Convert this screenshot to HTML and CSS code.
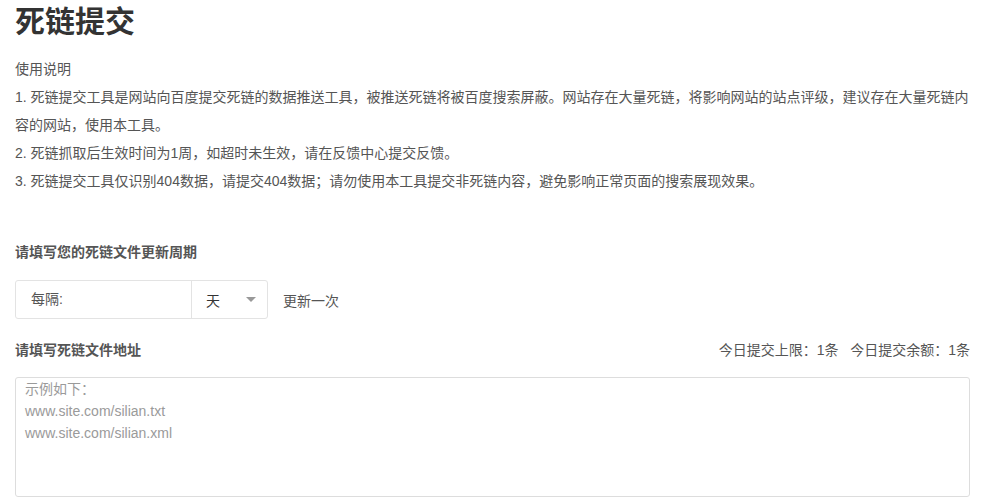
FILE: index.html
```html
<!DOCTYPE html>
<html lang="zh-CN">
  <head>
    <meta charset="UTF-8" />
    <meta name="viewport" content="width=device-width, initial-scale=1.0" />
    <title>死链提交</title>
    <link rel="stylesheet" href="styles.css">
  </head>
  <body>
    <div class="page">
      <h1 class="page-title">死链提交</h1>
      <div class="intro">
        <p>使用说明</p>
        <p>1. 死链提交工具是网站向百度提交死链的数据推送工具，被推送死链将被百度搜索屏蔽。网站存在大量死链，将影响网站的站点评级，建议存在大量死链内容的网站，使用本工具。</p>
        <p>2. 死链抓取后生效时间为1周，如超时未生效，请在反馈中心提交反馈。</p>
        <p>3. 死链提交工具仅识别404数据，请提交404数据；请勿使用本工具提交非死链内容，避免影响正常页面的搜索展现效果。</p>
      </div>

      <div class="section-title">请填写您的死链文件更新周期</div>
      <div class="period-row">
        <div class="period-group">
          <div class="period-label">每隔:</div>
          <div class="period-select">
            <span>天</span>
            <span class="caret"></span>
          </div>
        </div>
        <span class="period-suffix">更新一次</span>
      </div>

      <div class="address-head">
        <div class="section-title">请填写死链文件地址</div>
        <div class="quota">今日提交上限：1条&nbsp;&nbsp;&nbsp;今日提交余额：1条</div>
      </div>
      <textarea class="address-box" placeholder="示例如下：&#10;www.site.com/silian.txt&#10;www.site.com/silian.xml"></textarea>
    </div>
  </body>
</html>
```

FILE: styles.css
```css
body {
  margin: 0;
  padding: 0;
  background: #fff;
  font-family: "Liberation Sans", "Noto Sans CJK SC", sans-serif;
  font-size: 14px;
  color: #555;
}
.page {
  padding: 0 12px 0 15px;
}
.page-title {
  margin: 0;
  font-size: 30px;
  line-height: 44px;
  font-weight: bold;
  color: #333;
}
.intro {
  margin-top: 11px;
}
.intro p {
  margin: 0;
  line-height: 28px;
}
.section-title {
  font-weight: bold;
  color: #555;
  line-height: 20px;
}
.intro + .section-title {
  margin-top: 47px;
}
.period-row {
  display: flex;
  align-items: center;
  margin-top: 18px;
}
.period-group {
  display: flex;
  width: 251px;
  height: 37px;
  border: 1px solid #e3e3e3;
  border-radius: 3px;
}
.period-label {
  width: 160px;
  padding-left: 15px;
  line-height: 37px;
  color: #555;
  border-right: 1px solid #e3e3e3;
}
.period-select {
  flex: 1;
  display: flex;
  align-items: center;
  justify-content: space-between;
  padding: 0 11px 0 14px;
  color: #333;
}
.caret {
  width: 0;
  height: 0;
  border-left: 5px solid transparent;
  border-right: 5px solid transparent;
  border-top: 5px solid #999;
}
.period-suffix {
  margin-left: 15px;
  color: #555;
}
.address-head {
  display: flex;
  justify-content: space-between;
  align-items: center;
  margin-top: 21px;
}
.quota {
  color: #555;
  line-height: 20px;
}
.address-box {
  display: block;
  box-sizing: border-box;
  width: 955px;
  height: 120px;
  margin-top: 17px;
  padding: 0 9px;
  border: 1px solid #ddd;
  border-radius: 3px;
  font-family: "Liberation Sans", "Noto Sans CJK SC", sans-serif;
  font-size: 14px;
  line-height: 22px;
  color: #333;
  resize: none;
  outline: none;
}
.address-box::placeholder {
  color: #9a9a9a;
}
```
